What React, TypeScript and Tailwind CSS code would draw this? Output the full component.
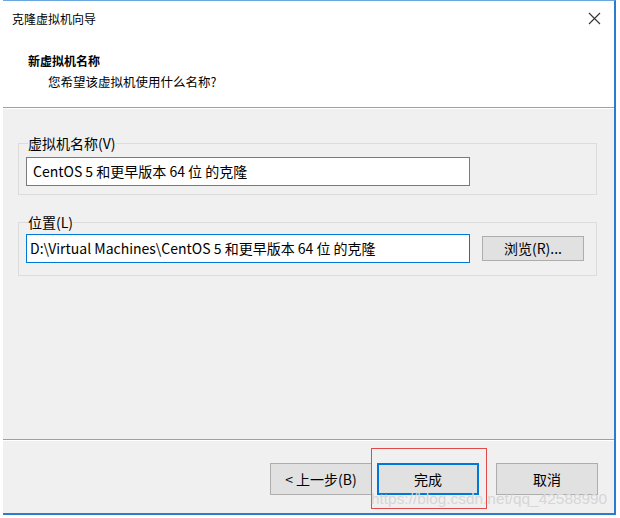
import React from "react";

const font = "font-['Noto_Sans_CJK_SC','Noto_Sans',sans-serif]";

function Btn({ children, primary }: { children: React.ReactNode; primary?: boolean }) {
  return (
    <div
      className={
        "flex items-center justify-center bg-[#e1e1e1] text-[14px] text-black " +
        (primary ? "border-2 border-[#0078d7]" : "border border-[#adadad]")
      }
      style={{ width: 102, height: 32 }}
    >
      {children}
    </div>
  );
}

export default function App() {
  return (
    <div className={"w-[620px] h-[518px] bg-white overflow-hidden " + font}>
      <div className="ml-[3px] w-[613px] h-[515px] border-t border-t-[#6aa7df] border-r-2 border-b-2 border-[#2b7bd0] bg-[#f0f0f0] flex flex-col">
        {/* header */}
        <div className="bg-white h-[107px] border-b border-[#a0a0a0] shrink-0">
          <div className="h-[35px] flex items-center justify-between pl-[9px] pr-[13px]">
            <span className="text-[12px] leading-[16px] text-black">克隆虚拟机向导</span>
            <svg width="13" height="13" viewBox="0 0 13 13">
              <path d="M1 1 L12 12 M12 1 L1 12" stroke="#333" strokeWidth="1.1" />
            </svg>
          </div>
          <div className="pl-[25px] mt-[17px] text-[12px] leading-[16px] font-bold text-black">新虚拟机名称</div>
          <div className="pl-[45px] mt-[5px] text-[12.5px] leading-[16px] text-black">您希望该虚拟机使用什么名称?</div>
        </div>
        <div className="h-px bg-white shrink-0" />

        {/* content */}
        <div className="flex-1 pl-[15px] pr-[17px]">
          <fieldset className="mt-[26px] border border-[#dcdcdc] pl-[7px] pr-[12px] pt-[6px] pb-[8px]">
            <legend className="ml-[2px] text-[14px] leading-[16px] text-black px-0">虚拟机名称(V)</legend>
            <div className="w-[444px] h-[29px] bg-white border border-[#7a7a7a] flex items-center pl-[6px] text-[14px] text-black">
              CentOS 5 和更早版本 64 位 的克隆
            </div>
          </fieldset>
          <fieldset className="mt-[19px] border border-[#dcdcdc] pl-[7px] pr-[12px] pt-[4px] pb-[12px]">
            <legend className="ml-[2px] text-[14px] leading-[16px] text-black px-0">位置(L)</legend>
            <div className="flex items-center gap-[12px]">
              <div className="w-[444px] h-[29px] bg-white border border-[#0078d7] flex items-center pl-[3px] text-[14px] text-black whitespace-nowrap overflow-hidden">
                D:\Virtual Machines\CentOS 5 和更早版本 64 位 的克隆
              </div>
              <div className="w-[102px] h-[25px] bg-[#e1e1e1] border border-[#adadad] flex items-center justify-center text-[14px] text-black">
                浏览(R)...
              </div>
            </div>
          </fieldset>
        </div>

        {/* footer */}
        <div className="h-px bg-[#a0a0a0] shrink-0" />
        <div className="h-px bg-white shrink-0" />
        <div className="relative h-[72px] shrink-0 flex items-start justify-end pt-[22px] pr-[16px]">
          <div className="flex">
            <Btn>&lt; 上一步(B)</Btn>
            <div className="ml-[5px]">
              <Btn primary>完成</Btn>
            </div>
            <div className="ml-[17px]">
              <Btn>取消</Btn>
            </div>
          </div>
          <div className="absolute left-[368px] top-[7px] w-[116px] h-[61px] border border-[#e04a4a]" />
          <div className="absolute left-[368px] top-[49px] text-[15.4px] leading-[18px] text-[#d6d6d6] font-['Liberation_Sans',sans-serif] whitespace-nowrap">
            https://blog.csdn.net/qq_42588990
          </div>
        </div>
      </div>
    </div>
  );
}
